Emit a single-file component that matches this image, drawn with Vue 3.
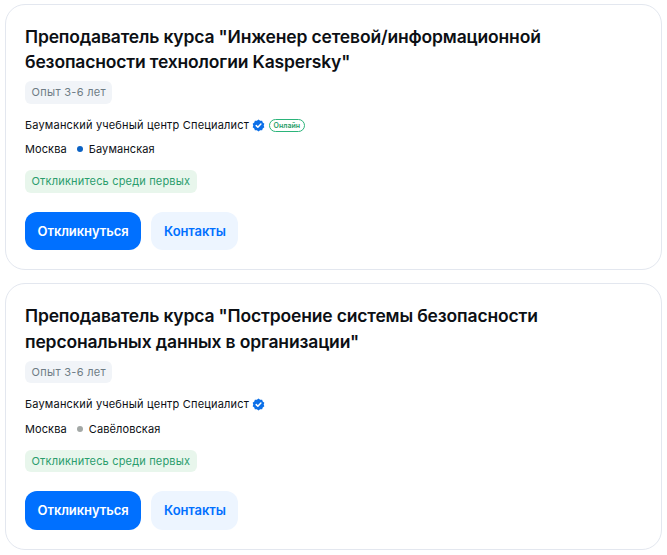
<script setup>
const cards = [
  {
    title: 'Преподаватель курса "Инженер сетевой/информационной безопасности технологии Kaspersky"',
    online: true,
    metro: 'Бауманская',
    dot: '#0b62c4',
  },
  {
    title: 'Преподаватель курса "Построение системы безопасности персональных данных в организации"',
    online: false,
    metro: 'Савёловская',
    dot: '#a3a8a6',
  },
]
</script>

<template>
  <div class="page">
    <article v-for="card in cards" :key="card.metro" class="card">
      <h2 class="title">{{ card.title }}</h2>
      <div class="tag exp">Опыт 3-6 лет</div>
      <div class="company">
        <span>Бауманский учебный центр Специалист</span>
        <svg class="verified" width="13" height="13" viewBox="0 0 24 24" aria-hidden="true">
          <path fill="#0b6fe8" d="M12 1l3 2.200 3.700-.1 1.100 3.500 3 2.200L21.600 12l1.200 3.200-3 2.200-1.100 3.500-3.700-.1L12 23l-3-2.200-3.700.1-1.100-3.500-3-2.200L2.400 12 1.200 8.800l3-2.200 1.100-3.500 3.700.1z"/>
          <path fill="none" stroke="#fff" stroke-width="2.800" stroke-linecap="round" stroke-linejoin="round" d="M7.800 12.200l3 3 5.600-5.800"/>
        </svg>
        <span v-if="card.online" class="online">Онлайн</span>
      </div>
      <div class="location">
        <span>Москва</span>
        <i class="dot" :style="{ background: card.dot }"></i>
        <span>{{ card.metro }}</span>
      </div>
      <div class="tag early">Откликнитесь среди первых</div>
      <div class="actions">
        <button class="btn primary">Откликнуться</button>
        <button class="btn secondary">Контакты</button>
      </div>
    </article>
  </div>
</template>

<style>
html, body { margin: 0; background: #fff; }
</style>

<style scoped>
.page {
  width: 657px;
  margin-left: 5px;
  padding-top: 4px;
  display: flex;
  flex-direction: column;
  gap: 13px;
  font-family: Inter, "Noto Sans", sans-serif;
  color: #0c0f14;
}
.card {
  box-sizing: border-box;
  height: 266.400px;
  border: 1px solid #e3e7ef;
  border-radius: 20px;
  padding: 19px 19px 0;
  display: flex;
  flex-direction: column;
  align-items: flex-start;
}
.title {
  margin: 0;
  font-size: 17.500px;
  line-height: 25.200px;
  font-weight: 600;
  letter-spacing: -0.160px;
  max-width: 560px;
}
.tag {
  box-sizing: border-box;
  height: 22.500px;
  line-height: 22.500px;
  padding: 0 6.500px;
  border-radius: 6px;
  font-size: 11px;
}
.exp {
  margin-top: 6.800px;
  background: #f1f4f8;
  color: #6e7c85;
  letter-spacing: 0.300px;
}
.company {
  margin-top: 12.300px;
  height: 18px;
  display: flex;
  align-items: center;
  font-size: 11px;
  letter-spacing: 0.190px;
}
.verified { margin-left: 3px; flex: none; }
.online {
  margin-left: 4px;
  box-sizing: border-box;
  height: 13px;
  line-height: 11px;
  padding: 0 3.500px;
  border: 1px solid #2bb47a;
  border-radius: 7px;
  font-size: 7px;
  font-weight: 600;
  color: #1f9d68;
  letter-spacing: 0;
}
.location {
  margin-top: 6.300px;
  height: 18px;
  display: flex;
  align-items: center;
  font-size: 11px;
  letter-spacing: 0.100px;
}
.dot {
  width: 6px;
  height: 6px;
  border-radius: 50%;
  margin: 0 6px 0 10px;
}
.early {
  margin-top: 12px;
  background: #e8f6ec;
  color: #2a9d6c;
  letter-spacing: 0.180px;
}
.actions {
  margin-top: 19.200px;
  display: flex;
  gap: 10px;
}
.btn {
  box-sizing: border-box;
  height: 38.400px;
  border: 0;
  border-radius: 12px;
  font-family: inherit;
  font-size: 13px;
  font-weight: 600;
  letter-spacing: -0.080px;
  padding: 0 0 1px;
}
.primary { width: 116px; background: #0070ff; color: #fff; }
.secondary { width: 87px; padding-left: 1px; background: #edf5ff; color: #0070ff; }
</style>
